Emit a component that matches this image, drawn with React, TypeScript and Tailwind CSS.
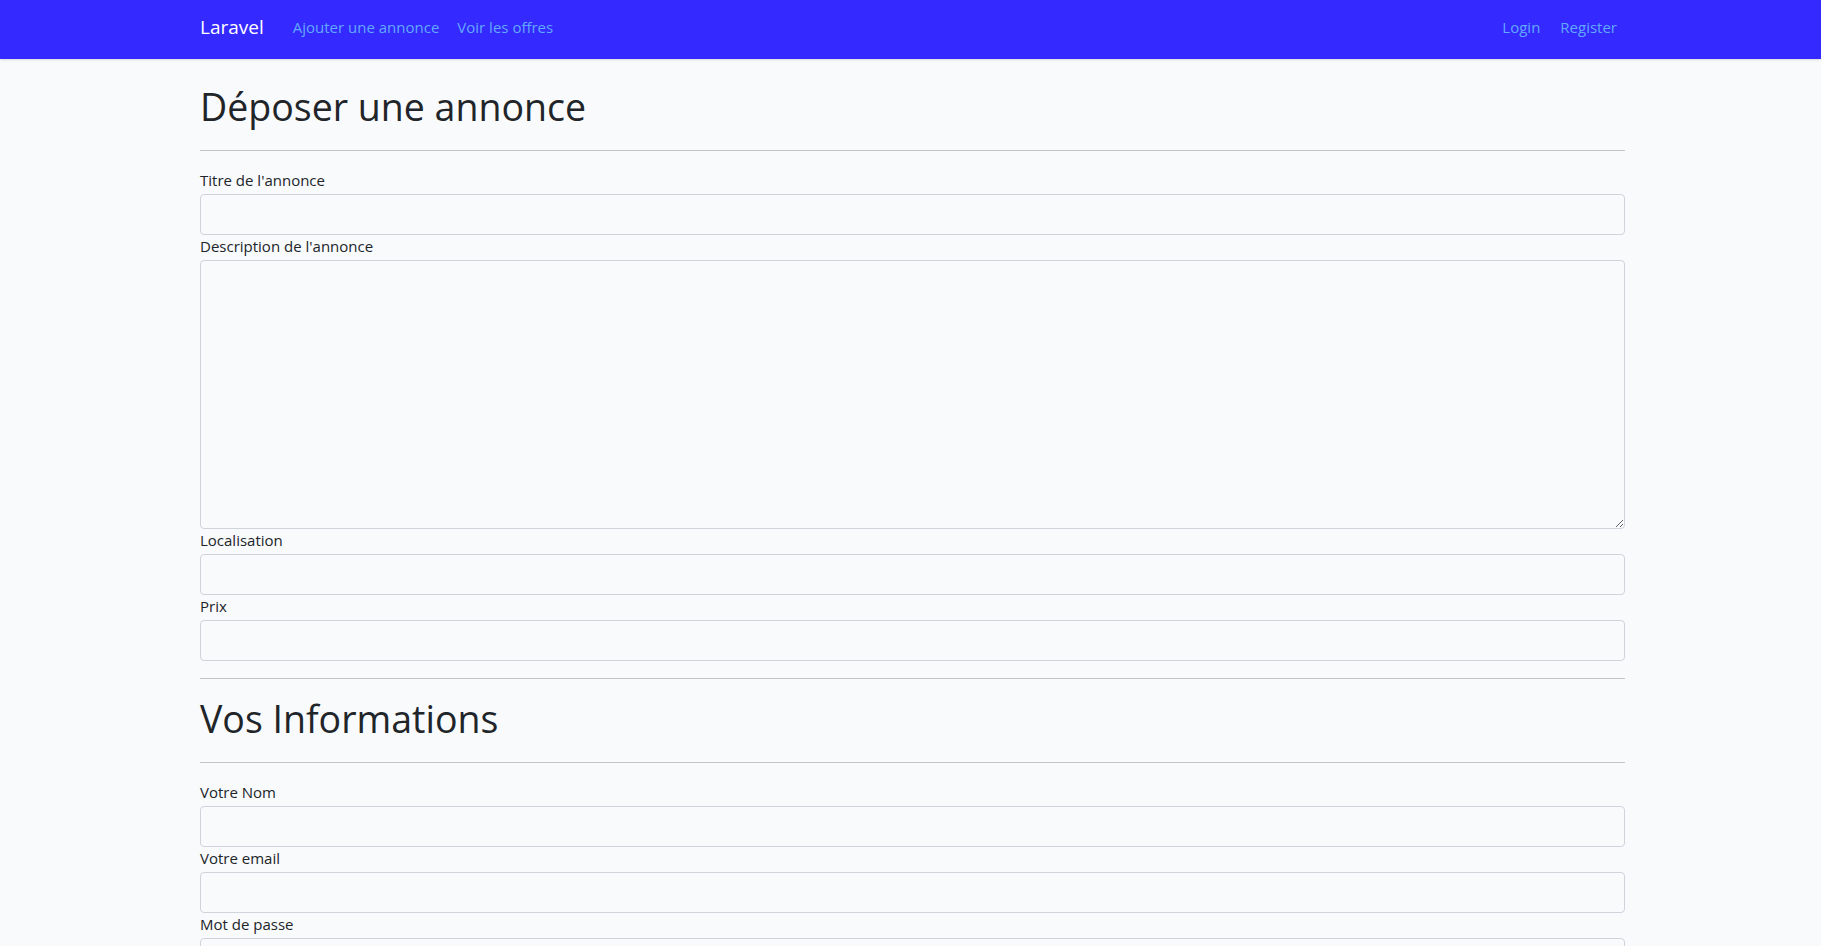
import React from 'react';

const font = { fontFamily: '"Open Sans", "Liberation Sans", sans-serif' };

function Field({ label, area }: { label: string; area?: boolean }) {
  return (
    <div>
      <label className="block text-[15px] leading-[22px] mb-[3px] text-[#212529]">{label}</label>
      {area ? (
        <textarea className="block w-full h-[269px] border border-[#ced4da] rounded-[4px] bg-transparent px-3 py-1.5 text-[15px] focus:outline-none" />
      ) : (
        <input
          type="text"
          className="block w-full h-[41px] border border-[#ced4da] rounded-[4px] bg-transparent px-3 text-[15px] focus:outline-none"
        />
      )}
    </div>
  );
}

export default function App() {
  return (
    <div className="min-h-screen bg-[#f8fafc] text-[#212529]" style={font}>
      <nav className="bg-[#3429ff] shadow-sm">
        <div className="ml-[200px] w-[1425px] h-[59px] pb-[5px] flex items-center justify-between">
          <div className="flex items-center">
            <a href="#" className="text-white text-[19px] mr-5">Laravel</a>
            <a href="#" className="text-[#62a8ff] text-[15px] px-[9px]">Ajouter une annonce</a>
            <a href="#" className="text-[#62a8ff] text-[15px] px-[9px]">Voir les offres</a>
          </div>
          <div className="flex items-center">
            <a href="#" className="text-[#62a8ff] text-[15px] px-[10px]">Login</a>
            <a href="#" className="text-[#62a8ff] text-[15px] pl-[10px] pr-2">Register</a>
          </div>
        </div>
      </nav>

      <main className="ml-[200px] w-[1425px] pt-[25px] pb-10">
        <h1 className="text-[37.5px] leading-[1.2] font-normal mb-[20.5px]">Déposer une annonce</h1>
        <hr className="border-0 border-t border-[#c3c4c6] mb-[18px]" />

        <form className="flex flex-col">
          <Field label="Titre de l'annonce" />
          <Field label="Description de l'annonce" area />
          <Field label="Localisation" />
          <Field label="Prix" />

          <hr className="border-0 border-t border-[#c3c4c6] mt-[17px] mb-[17px]" />
          <h1 className="text-[37.5px] leading-[1.2] font-normal mb-[21px]">Vos Informations</h1>
          <hr className="border-0 border-t border-[#c3c4c6] mb-[18px]" />

          <Field label="Votre Nom" />
          <Field label="Votre email" />
          <Field label="Mot de passe" />
        </form>
      </main>
    </div>
  );
}
